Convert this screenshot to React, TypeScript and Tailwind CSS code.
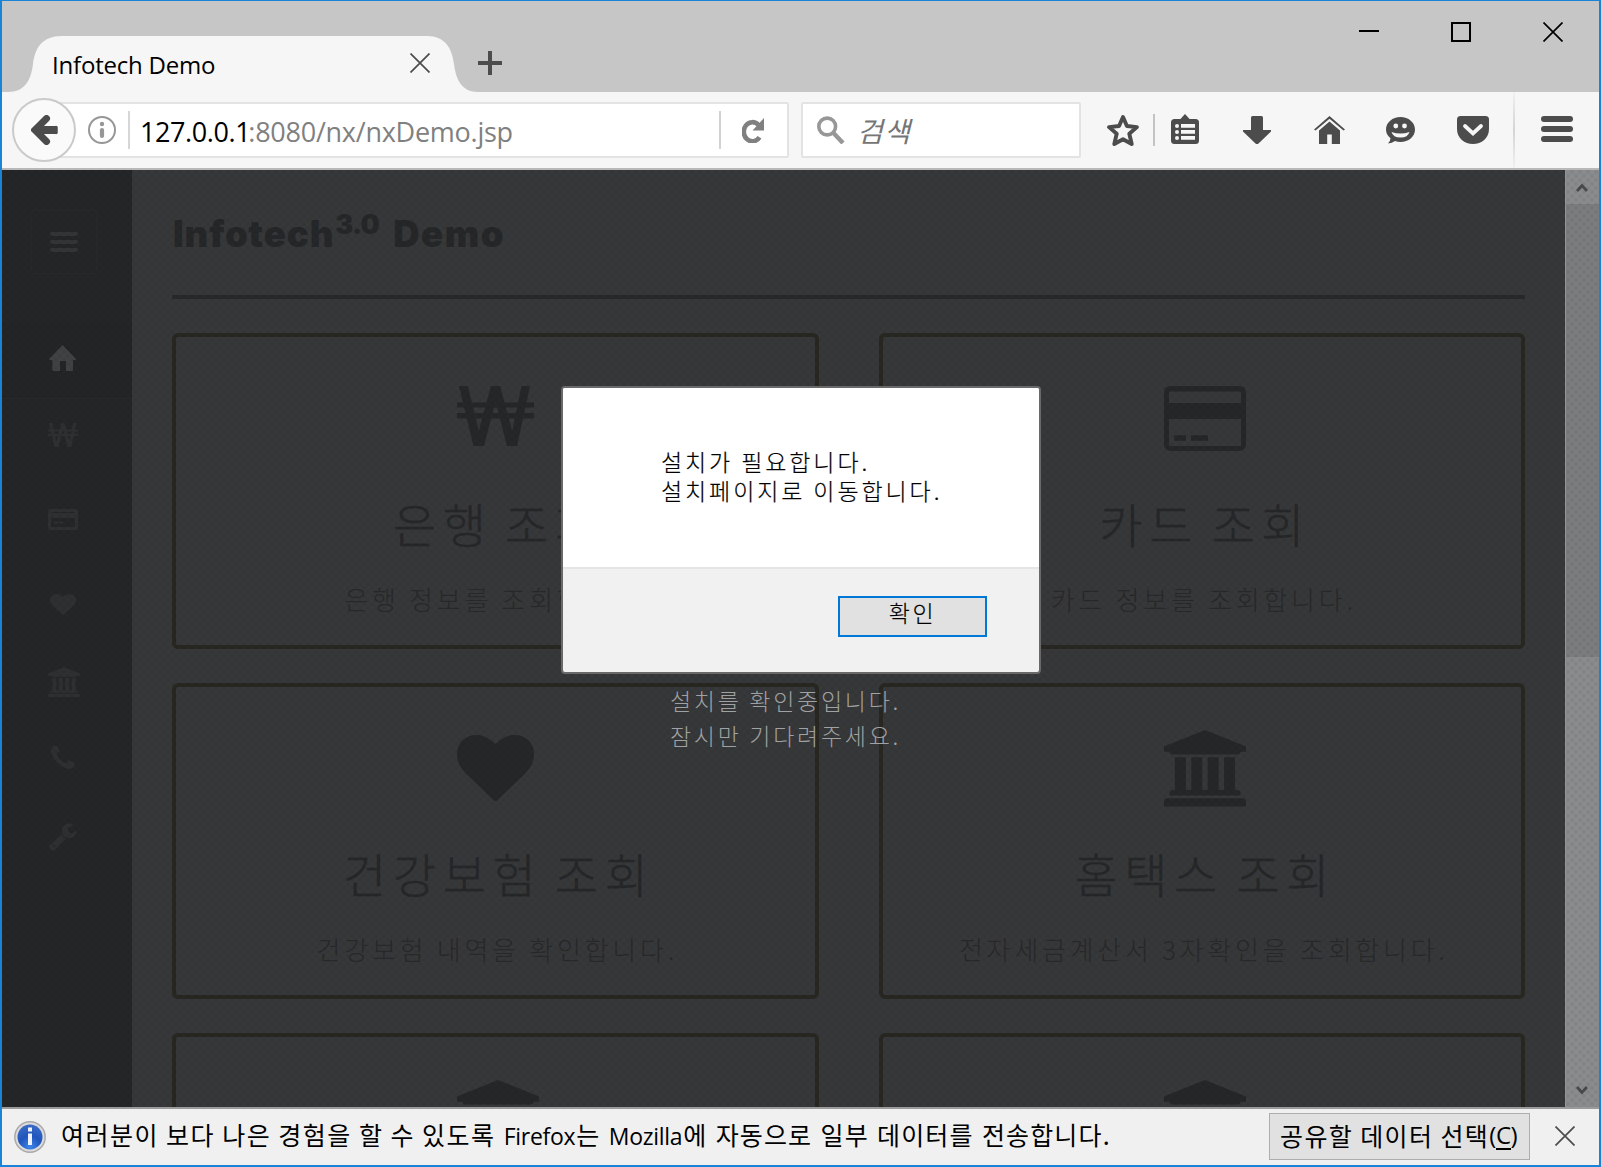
import type { ReactNode } from 'react';

const WonIcon = ({ className }: { className: string }) => (
  <svg className={className} viewBox="0 0 77 60" preserveAspectRatio="none" fill="currentColor">
    <path d="M2 0h8.800l11 45L34 0h9l12.200 45L64.500 0H73L60 60H50L38.500 15 27 60H16.500z" />
    <path d="M0 16.500h77v5H0zM0 27h77v5.500H0z" />
  </svg>
);

const CardIcon = ({ className }: { className: string }) => (
  <svg className={className} viewBox="0 0 82 65" fill="currentColor">
    <path fillRule="evenodd" d="M7 0h68q7 0 7 7v51q0 7-7 7H7q-7 0-7-7V7q0-7 7-7zM6 5.500q-1 0-1 1V17h72V6.500q0-1-1-1zM5 33v26q0 1 1 1h70q1 0 1-1V33z" />
    <path d="M10.300 49.300H22v5.400H10.300zM27 49.300h17v5.400H27z" />
  </svg>
);

const SmallCardIcon = ({ className }: { className: string }) => (
  <svg className={className} viewBox="0 0 30 21" fill="currentColor">
    <path fillRule="evenodd" d="M2 0h26q2 0 2 2v17q0 2-2 2H2q-2 0-2-2V2q0-2 2-2zM3 3v1h24V3zM3 9v9h24V9z" />
    <path d="M6 12.500h4v2H6zM11 12.500h4v2h-4z" />
  </svg>
);

const HeartIcon = ({ className }: { className: string }) => (
  <svg className={className} viewBox="0 128 1792 1536" preserveAspectRatio="none" fill="currentColor">
    <path d="M896 1664q-26 0-44-18l-624-602q-10-8-27.500-26t-55.500-65.500-68-97.500-53.500-121-23.500-138q0-220 127-344t351-124q62 0 126.500 21.500t120 58 95.500 68.500 76 68q36-36 76-68t95.500-68.500 120-58 126.500-21.500q224 0 351 124t127 344q0 221-229 450l-623 600q-18 18-44 18z" />
  </svg>
);

const BankIcon = ({ className }: { className: string }) => (
  <svg className={className} viewBox="0 0 1920 1792" fill="currentColor">
    <path d="M960 0l960 384v128h-128q0 26-20.500 45t-48.500 19h-1526q-28 0-48.500-19t-20.500-45h-128v-128zm-704 640h256v768h128v-768h256v768h128v-768h256v768h128v-768h256v768h59q28 0 48.500 19t20.500 45v64h-1664v-64q0-26 20.500-45t48.500-19h59v-768zm1595 960q28 0 48.500 19t20.500 45v128h-1920v-128q0-26 20.500-45t48.500-19h1782z" />
  </svg>
);

const PhoneIcon = ({ className }: { className: string }) => (
  <svg className={className} viewBox="192 192 1408 1408" fill="currentColor">
    <path d="M1600 1240q0 27-10 70.500t-21 68.500q-21 50-122 106-94 51-186 51-27 0-53-3.500t-57.500-12.500-47-14.500-55.500-20.500-49-18q-98-35-175-83-127-79-264-216t-216-264q-48-77-83-175-3-9-18-49t-20.500-55.500-14.500-47-12.500-57.500-3.500-53q0-92 51-186 56-101 106-122 25-11 68.500-21t70.500-10q14 0 21 3 18 6 53 76 11 19 30 54t35 63.500 31 53.500q3 4 17.500 25t21.500 35.500 7 28.500q0 20-28.500 50t-62 55-62 53-28.500 46q0 9 5 22.500t8.500 20.500 14 24 11.500 19q76 137 174 235t235 174q2 1 19 11.500t24 14 20.500 8.500 22.500 5q18 0 46-28.500t53-62 55-62 50-28.500q14 0 28.500 7t35.500 21.500 25 17.500q25 15 53.500 31t63.500 35 54 30q70 35 76 53 3 7 3 21z" />
  </svg>
);

const WrenchIcon = ({ className }: { className: string }) => (
  <svg className={className} viewBox="85 0 1641 1665" fill="currentColor">
    <path d="M448 1472q0-26-19-45t-45-19-45 19-19 45 19 45 45 19 45-19 19-45zm644-420l-682 682q-37 37-90 37-52 0-91-37l-106-108q-38-36-38-90 0-53 38-91l681-681q39 98 114.500 173.500t173.500 114.500zm634-435q0 39-23 106-47 134-164.500 217.500t-258.500 83.500q-185 0-316.500-131.500t-131.500-316.500 131.500-316.500 316.500-131.500q58 0 121.500 16.500t107.500 46.500q16 11 16 28t-16 28l-293 169v224l193 107q5-3 79-48.500t135.500-81 70.500-35.500q15 0 23.500 10t8.500 25z" transform="translate(0 -116)" />
  </svg>
);

const HomeIcon = ({ className }: { className: string }) => (
  <svg className={className} viewBox="0 0 27 26" fill="currentColor">
    <path d="M13.500 0L27 14l-.5 1H24v10q0 1-1 1h-6V16h-6v10H4.500q-1.200 0-1.200-1V15H.5L0 14z" />
  </svg>
);

const Cross = ({ className, w }: { className: string; w: number }) => (
  <svg className={className} viewBox="0 0 20 20" fill="none" stroke="currentColor" strokeWidth={w}>
    <path d="M.5.5l19 19M19.500.5l-19 19" />
  </svg>
);

function Tab() {
  return (
    <div className="relative ml-[6px] flex h-[56px] w-[470px] items-center self-end">
      <svg className="absolute inset-0 h-[56px] w-[470px]" viewBox="0 0 470 56" fill="#f6f6f6">
        <path d="M0 56C17 56 23 44 25 28 27 12 34 0 54 0H419C437 0 444 12 446 28 448 44 454 56 470 56z" />
      </svg>
      <span className="relative mt-[2px] ml-[44px] w-[180px] text-[24px] leading-[40px] tracking-[-0.2px] whitespace-nowrap text-black">Infotech Demo</span>
      <Cross className="relative mb-[2px] ml-[178px] size-5 text-[#4c4c4c]" w={1.7} />
    </div>
  );
}

function TitleBar() {
  return (
    <div className="flex h-[91px] shrink-0 bg-[#c6c6c6]">
      <Tab />
      <svg className="mt-[50px] size-6" viewBox="0 0 24 24" stroke="#4c4c4c" strokeWidth="4">
        <path d="M12 0v24M0 12h24" />
      </svg>
      <div className="mt-[21px] mr-[36px] ml-auto flex h-5 gap-[72px]">
        <div className="mt-[8px] h-[2px] w-5 bg-black" />
        <div className="size-5 border-2 border-black" />
        <Cross className="size-5 text-black" w={1.7} />
      </div>
    </div>
  );
}

function UrlBar() {
  return (
    <div className="ml-[-32px] flex h-[56px] w-[745px] items-center rounded-[2px] border-2 border-[#e3e3e3] bg-white">
      <svg className="ml-[42px] size-7" viewBox="0 0 28 28" fill="none">
        <circle cx="14" cy="14" r="13" stroke="#979797" strokeWidth="2" />
        <circle cx="14" cy="8" r="2.200" fill="#979797" />
        <path d="M14 14v6" stroke="#979797" strokeWidth="4.200" strokeLinecap="round" />
      </svg>
      <div className="ml-[12px] h-[38px] w-[2px] bg-[#d6d6d6]" />
      <div className="mt-[3px] ml-[10px] w-[579px] text-[27px] leading-[40px] tracking-[-0.25px] whitespace-nowrap text-[#808080]">
        <span className="mr-[-2px] tracking-[-0.4px] text-black">127.0.0.1</span>:8080/nx/nxDemo.jsp
      </div>
      <div className="h-[38px] w-[2px] bg-[#d2d2d2]" />
      <svg className="ml-[21px] h-[25px] w-[22px]" viewBox="0 0 22 25">
        <path d="M17.500 19.200A8.600 9.600 0 1 1 16.500 7" fill="none" stroke="#808080" strokeWidth="4.600" />
        <path d="M22 0v12.500H10.500z" fill="#808080" />
      </svg>
    </div>
  );
}

function SearchBox() {
  return (
    <div className="ml-[12px] flex h-[56px] w-[280px] items-center rounded-[2px] border-2 border-[#e3e3e3] bg-white">
      <svg className="ml-[14px] size-7" viewBox="0 0 28 28" fill="none" stroke="#979797">
        <circle cx="10.200" cy="10.500" r="8.400" strokeWidth="3.600" />
        <path d="M16 16.500l10 10.500" strokeWidth="4.400" />
      </svg>
      <span className="mb-px ml-[12px] font-['Noto_Sans_CJK_KR'] text-[28px] leading-[40px] tracking-[1.5px] text-[#757575] italic">검색</span>
    </div>
  );
}

function ToolbarIcons() {
  return (
    <div className="flex items-center text-[#4c4c4c]">
      <svg className="ml-[26px] size-8" viewBox="0 0 32 32" fill="none" stroke="currentColor" strokeWidth="3.900" strokeLinejoin="round">
        <path d="M16 3l3.900 9 10 1.100-7.600 6.700 2.400 10.200L16 25.200 7.300 30l2.400-10.200L2.100 13.100l10-1.100z" />
      </svg>
      <div className="ml-[14px] h-8 w-[2px] bg-[#c4c4c4]" />
      <svg className="mb-[2px] ml-[16px] h-[30px] w-[28px]" viewBox="0 0 28 30" fill="currentColor">
        <path d="M9 5.500L14 0l5 5.500z" />
        <rect y="5" width="28" height="25" rx="3.500" />
        <path d="M10 10h14v3.800H10zM10 16h14v3.800H10zM10 22h14v3.800H10z" fill="#f6f6f6" />
        <circle cx="6" cy="12" r="2" fill="#f6f6f6" />
        <circle cx="6" cy="18" r="2" fill="#f6f6f6" />
        <circle cx="6" cy="24" r="2" fill="#f6f6f6" />
      </svg>
      <svg className="ml-[44px] size-7" viewBox="0 0 28 28" fill="currentColor">
        <path d="M9.500 0h9q1.500 0 1.500 1.500V14h8v1.500L15.500 27.500q-1.500 1-3 0L0 15.500V14h8V1.500Q8 0 9.500 0z" />
      </svg>
      <svg className="ml-[43px] h-[28px] w-[31px]" viewBox="0 0 31 28" fill="currentColor">
        <path d="M0 13.500L15.500 0 31 13.500 29.500 14.500 15.500 2.800 1.500 14.500z" />
        <path d="M15.500 5.500L26 14.400V28h-8.200V18.500h-4.600V28H5V14.400z" />
      </svg>
      <svg className="ml-[41px] h-[28px] w-[29px]" viewBox="0 0 29 28">
        <path d="M14.500 1C22.500 1 29 6.500 29 13.500S22.500 26 14.500 26q-3 0-5.500-.9Q6 27.500 2 27.500 4.500 25 4.500 22.300 0 18.800 0 13.500C0 6.500 6.500 1 14.500 1z" fill="currentColor" />
        <circle cx="9.800" cy="10" r="2.400" fill="#f6f6f6" />
        <circle cx="18.500" cy="10" r="2.400" fill="#f6f6f6" />
        <path d="M5.500 16q9 3 18 0-1.500 5.500-9 5.500T5.500 16z" fill="#f6f6f6" />
      </svg>
      <svg className="ml-[42px] h-[28px] w-[32px]" viewBox="0 0 32 28" fill="none">
        <path d="M3.500 0h25Q32 0 32 3.500V13c0 9-7.500 15-16 15S0 22 0 13V3.500Q0 0 3.500 0z" fill="currentColor" />
        <path d="M8 10l8 7.500L24 10" stroke="#f6f6f6" strokeWidth="3.800" strokeLinecap="round" />
      </svg>
      <div className="ml-[24px] h-[76px] w-[2px] bg-linear-to-b from-[#f0f0f0] via-[#d4d4d4] to-[#f0f0f0]" />
      <div className="mb-[2px] ml-[26px] flex w-8 flex-col gap-1">
        <div className="h-[6px] rounded-[3px] bg-[#4c4c4c]" />
        <div className="h-[6px] rounded-[3px] bg-[#4c4c4c]" />
        <div className="h-[6px] rounded-[3px] bg-[#4c4c4c]" />
      </div>
    </div>
  );
}

function Toolbar() {
  return (
    <div className="flex h-[78px] shrink-0 items-center border-b-2 border-[#b8b8b8] bg-[#f6f6f6]">
      <div className="z-10 ml-[10px] flex size-16 shrink-0 items-center justify-center rounded-full border-2 border-[#cacaca] bg-[#fafafa]">
        <svg className="h-[30px] w-[27px]" viewBox="0 0 27 30" fill="none" stroke="#4c4c4c" strokeWidth="7">
          <path d="M15.500 3.500L4 15l11.500 11.500" strokeLinecap="round" strokeLinejoin="miter" />
          <path d="M6 15h18.500" strokeWidth="8" strokeLinecap="butt" />
          <path d="M25 12.500v5" strokeWidth="3.500" strokeLinecap="round" />
        </svg>
      </div>
      <UrlBar />
      <SearchBox />
      <ToolbarIcons />
    </div>
  );
}

function Sidebar() {
  return (
    <nav className="flex w-[130px] shrink-0 flex-col items-center bg-[#242628] pr-[8px] text-[#2e3032]">
      <div className="mt-[40px] ml-[2px] flex h-[64px] w-[66px] flex-col items-center justify-center gap-1 rounded border border-[#27292b]">
        <div className="h-1 w-7 rounded-full bg-[#333537]" />
        <div className="h-1 w-7 rounded-full bg-[#333537]" />
        <div className="h-1 w-7 rounded-full bg-[#333537]" />
      </div>
      <div className="mt-[48px] mr-[-8px] flex h-[77px] w-[130px] justify-center border-b border-[#27292b] bg-[#232527] pt-[23px] pr-[9px] text-[#404244]">
        <HomeIcon className="h-[26px] w-[27px]" />
      </div>
      <WonIcon className="mt-[24px] h-[24px] w-[30px]" />
      <SmallCardIcon className="mt-[62px] h-[21px] w-[30px]" />
      <HeartIcon className="mt-[64px] h-[21px] w-[26px]" />
      <BankIcon className="mt-[52px] ml-[2px] h-[30px] w-[32px]" />
      <PhoneIcon className="mt-[49px] size-6" />
      <WrenchIcon className="mt-[53px] h-[28px] w-[28px]" />
    </nav>
  );
}

function ServiceCard({ icon, title, text }: { icon: ReactNode; title: string; text: string }) {
  return (
    <div className="flex h-[316px] flex-col items-center rounded-[6px] border-4 border-[#282722] pt-[43px] whitespace-nowrap">
      <div className="flex h-[76px] shrink-0 items-start text-[#252729]">{icon}</div>
      <h2 className="mt-[37px] pl-[7px] text-[47px] leading-[60px] font-light tracking-[6.6px] text-[#252729] [word-spacing:-4.5px] [-webkit-text-stroke:0.4px_#252729]">{title}</h2>
      <p className="mt-[28px] pl-[4px] text-[26px] leading-[36px] font-light tracking-[3.75px] text-[#27292a]">{text}</p>
    </div>
  );
}

function Main() {
  return (
    <main className="flex-1 overflow-hidden bg-[#373839] px-[40px] pt-[39px] font-['Noto_Sans_CJK_KR']">
      <h1 className="flex h-[50px] pl-px font-['Inter'] text-[36.5px] leading-[50px] font-black tracking-[1.2px] text-[#252729]">
        <span className="tracking-[0.9px]">Infotech</span>
        <span className="ml-px text-[27px] leading-[31px] tracking-[-0.7px]">3.0</span>
        <span className="ml-[14px] tracking-[1.6px]">Demo</span>
      </h1>
      <div className="mt-[36px] h-1 bg-[#27292a]" />
      <div className="mt-[34px] grid grid-cols-2 gap-x-[60px] gap-y-[34px]">
        <ServiceCard icon={<WonIcon className="mt-[6px] h-[60px] w-[77px]" />} title="은행 조회" text="은행 정보를 조회합니다." />
        <ServiceCard icon={<CardIcon className="mt-[6px] ml-[6px] h-[65px] w-[82px]" />} title="카드 조회" text="카드 정보를 조회합니다." />
        <ServiceCard icon={<HeartIcon className="mt-[5px] h-[66px] w-[77px]" />} title="건강보험 조회" text="건강보험 내역을 확인합니다." />
        <ServiceCard icon={<BankIcon className="ml-[6px] h-[76.500px] w-[82px]" />} title="홈택스 조회" text="전자세금계산서 3자확인을 조회합니다." />
        <ServiceCard icon={<BankIcon className="ml-[5px] h-[76.500px] w-[82px]" />} title="" text="" />
        <ServiceCard icon={<BankIcon className="ml-[6px] h-[76.500px] w-[82px]" />} title="" text="" />
      </div>
    </main>
  );
}

function Scrollbar() {
  return (
    <div className="flex w-[34px] shrink-0 flex-col items-center border-l border-[#969798] bg-[#8b8c8d]">
      <div className="flex h-[34px] items-center pt-px pr-px">
        <svg className="h-[9px] w-[12px]" viewBox="0 0 12 9" fill="none" stroke="#4a4b4c" strokeWidth="2.800">
          <path d="M1 8l5-5.500L11 8" />
        </svg>
      </div>
      <div className="h-[453px] w-full bg-[#7c7d7e]" />
      <div className="mt-auto flex h-[34px] items-center pr-px">
        <svg className="h-[9px] w-[12px]" viewBox="0 0 12 9" fill="none" stroke="#4a4b4c" strokeWidth="2.800">
          <path d="M1 1l5 5.500L11 1" />
        </svg>
      </div>
    </div>
  );
}

function AlertDialog() {
  return (
    <div className="absolute top-[216px] left-[559px] flex h-[288px] w-[480px] flex-col overflow-hidden rounded-[4px] border-2 border-[#696969] bg-[#f1f1f1] font-['Noto_Sans_CJK_KR'] text-[23px] font-light text-black [-webkit-text-stroke:0.2px_#000]">
      <div className="h-[181px] shrink-0 border-b-2 border-[#e5e5e5] bg-white pt-[59px] pl-[98px] leading-[29px] tracking-[2.9px] whitespace-nowrap">
        <p>
          설치가 필요합니다.
          <br />
          설치페이지로 이동합니다.
        </p>
      </div>
      <button className="mt-[27px] mr-[52px] flex h-[41px] w-[149px] items-center justify-center self-end border-2 border-[#0078d7] bg-[#e1e1e1] pb-[8px] leading-[29px] tracking-[2.5px]">확인</button>
    </div>
  );
}

function NotificationBar() {
  return (
    <div className="flex h-[58px] shrink-0 items-center border-t-2 border-[#9b9b9b] bg-[#f0f0f0] font-['Noto_Sans_CJK_KR'] text-[25px] leading-[40px] whitespace-nowrap text-black">
      <svg className="ml-[12px] size-8" viewBox="0 0 32 32">
        <defs>
          <radialGradient id="info" cx="0.500" cy="0.900" r="0.900">
            <stop offset="0" stopColor="#3f86e8" />
            <stop offset="0.500" stopColor="#1f55bd" />
            <stop offset="1" stopColor="#3c6cc4" />
          </radialGradient>
        </defs>
        <circle cx="16" cy="16" r="15.200" fill="#dcdcdc" stroke="#a9a9a9" strokeWidth="1.500" />
        <circle cx="16" cy="16" r="12.500" fill="url(#info)" />
        <path d="M14 6.500h4v4h-4zM14 12.500h4V24h-4z" fill="#eef3fb" />
      </svg>
      <p className="mb-[4px] ml-[15px] tracking-[1.5px]">
        여러분이 보다 나은 경험을 할 수 있도록 <span className="mr-[1px] ml-[1px] font-['Open_Sans'] text-[23px] tracking-[-0.3px]">Firefox</span>는{' '}
        <span className="mr-[1px] ml-[1px] font-['Open_Sans'] text-[23px] tracking-[-0.3px]">Mozilla</span>
        <span className="tracking-[1.15px] [word-spacing:1.5px]">에 자동으로 일부 데이터를 전송합니다.</span>
      </p>
      <button className="mr-[25px] mb-px ml-auto flex h-[47px] w-[261px] items-center border border-[#adadad] bg-[#e1e1e1] pb-[4px] pl-[10px] tracking-[1.4px]">
        공유할 데이터 선택
        <span className="flex font-['Open_Sans'] text-[24px] tracking-[-0.4px]">
          (<span className="h-[35px] border-b-2 border-black">C</span>)
        </span>
      </button>
      <Cross className="mr-[24px] mb-[2px] size-5 text-[#4c4c4c]" w={1.7} />
    </div>
  );
}

export default function App() {
  return (
    <div className="flex h-[1167px] w-[1601px] flex-col overflow-hidden border-x-2 border-t border-b-2 border-[#1883d7] bg-white font-['Open_Sans','Noto_Sans_CJK_KR',sans-serif]">
      <TitleBar />
      <Toolbar />
      <div className="relative flex min-h-0 flex-1 overflow-hidden">
        <Sidebar />
        <Main />
        <Scrollbar />
        <div className="pointer-events-none absolute inset-0 bg-[radial-gradient(circle_at_2px_2px,rgba(0,0,0,0.055)_1.5px,transparent_3px),radial-gradient(circle_at_6px_6px,rgba(0,0,0,0.055)_1.5px,transparent_3px)] bg-size-[8px_8px]" />
        <div className="absolute top-[513px] left-[668px] font-['Noto_Sans_CJK_KR'] text-[23px] leading-[35px] font-light tracking-[2.7px] whitespace-nowrap text-[#a0a1a2]">
          <p>설치를 확인중입니다.</p>
          <p>잠시만 기다려주세요.</p>
        </div>
        <AlertDialog />
      </div>
      <NotificationBar />
    </div>
  );
}
